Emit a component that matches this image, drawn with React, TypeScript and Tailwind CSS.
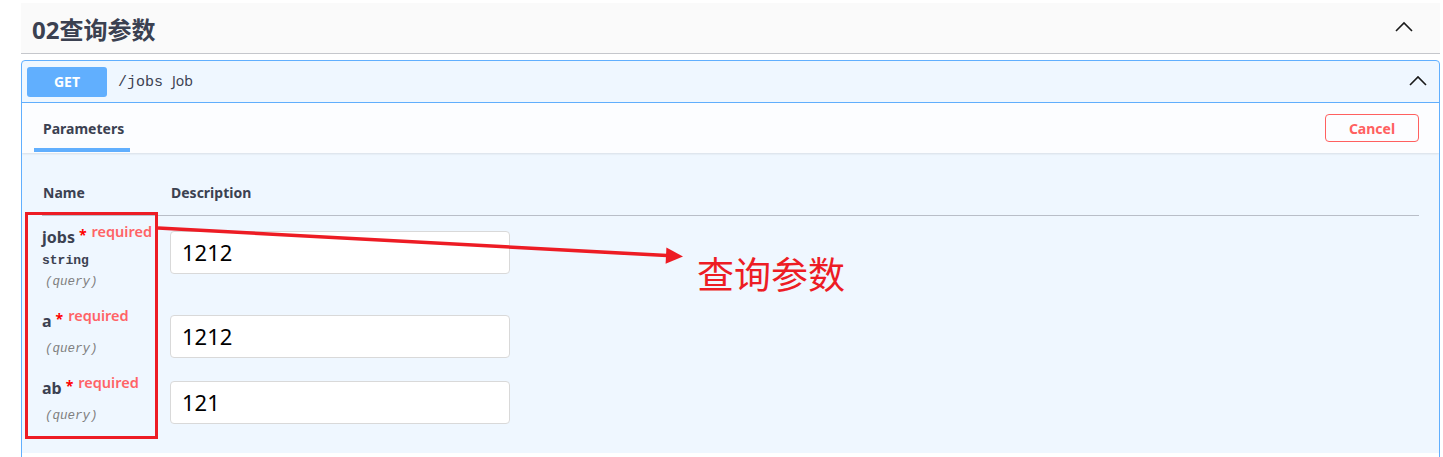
import React from "react";

const Chevron = ({ className }: { className?: string }) => (
  <svg className={className} width="18" height="11" viewBox="0 0 18 11" fill="none">
    <polyline points="1,10 9,2 17,10" stroke="#1a1a1a" strokeWidth="1.6" fill="none" />
  </svg>
);

const Req = () => (
  <>
    <span className="relative top-[-3px] ml-[4px] text-[14px] text-[#ff0000]">*</span>
    <span className="relative top-[-6px] ml-[5px] text-[14.5px] font-semibold text-[#ff6366]">required</span>
  </>
);

const Input = ({ value, mt }: { value: string; mt: string }) => (
  <div
    className={`w-[340px] h-[43px] ${mt} bg-white border border-[#d9d9d9] rounded-[4px] flex items-center pl-[11px] text-[22px] text-black`}
  >
    {value}
  </div>
);

export default function App() {
  return (
    <div
      className="relative w-[1443px] h-[457px] overflow-hidden bg-white"
      style={{ fontFamily: '"Noto Sans","Noto Sans CJK SC",sans-serif' }}
    >
      {/* Tag header */}
      <div className="ml-[21px] mr-[3px] pt-[3px]">
        <div className="h-[51px] bg-[#fafafa] border-b border-[#c5c7cc] flex items-center justify-between pl-[11px] pr-[27px]">
          <span className="text-[24px] font-bold text-[#3b4151] pt-[3px]">02查询参数</span>
          <Chevron className="mt-[-4px]" />
        </div>
      </div>

      {/* Opblock */}
      <div className="mt-[6px] ml-[21px] mr-[3px] border border-[#61affe] rounded-[4px] bg-[#eff7ff] overflow-hidden">
        {/* Summary */}
        <div className="h-[42px] border-b border-[#61affe] flex items-center pl-[5px] pr-[12px]">
          <div className="w-[80px] h-[30px] rounded-[3px] bg-[#61affe] flex items-center justify-center text-white text-[14px] font-bold">
            GET
          </div>
          <div className="ml-[11px] flex items-baseline pt-[2px]">
            <span
              className="text-[15px] text-[#3b4151]"
              style={{ fontFamily: '"Liberation Mono",monospace' }}
            >
              /jobs
            </span>
            <span className="ml-[9px] text-[14px] text-[#3b4151]">Job</span>
          </div>
          <div className="flex-1" />
          <Chevron className="mt-[-2px]" />
        </div>

        {/* Section header */}
        <div className="h-[50px] bg-white/80 shadow-[0_1px_2px_rgba(0,0,0,0.1)] flex items-center justify-between pr-[20px]">
          <div className="flex flex-col h-full ml-[12px]">
            <div className="flex-1 flex items-center pl-[9px] pr-[6px] pt-[5px] text-[14px] font-bold text-[#3b4151]">
              Parameters
            </div>
            <div className="h-[4px] bg-[#61affe] mb-[1px]" />
          </div>
          <div className="w-[94px] h-[28px] border border-[#ff6060] rounded-[4px] flex items-center justify-center text-[14px] font-bold text-[#ff6060]">
            Cancel
          </div>
        </div>

        {/* Table */}
        <div className="mx-[20px] pt-[29px]">
          <div className="flex h-[34px] border-b border-[#b9bec8] text-[14px] font-bold text-[#3b4151] leading-[22px]">
            <div className="w-[128px] pl-[1px]">Name</div>
            <div className="pl-[1px]">Description</div>
          </div>

          {/* Row 1 */}
          <div className="flex h-[84px]">
            <div className="w-[128px] pt-[9px]">
              <div className="h-[24px] leading-[24px] text-[16px] font-bold text-[#3b4151] whitespace-nowrap">
                jobs
                <Req />
              </div>
              <div
                className="mt-[4px] h-[16px] leading-[16px] text-[13px] font-semibold text-[#3b4151]"
                style={{ fontFamily: '"Liberation Mono",monospace' }}
              >
                string
              </div>
              <div
                className="mt-[5px] h-[16px] leading-[16px] pl-[3px] text-[12.5px] italic text-[#808080]"
                style={{ fontFamily: '"Liberation Mono",monospace' }}
              >
                (query)
              </div>
            </div>
            <Input value="1212" mt="mt-[15px]" />
          </div>

          {/* Row 2 */}
          <div className="flex h-[67px]">
            <div className="w-[128px] pt-[9px]">
              <div className="h-[24px] leading-[24px] text-[16px] font-bold text-[#3b4151] whitespace-nowrap">
                a
                <Req />
              </div>
              <div
                className="mt-[8px] h-[16px] leading-[16px] pl-[3px] text-[12.5px] italic text-[#808080]"
                style={{ fontFamily: '"Liberation Mono",monospace' }}
              >
                (query)
              </div>
            </div>
            <Input value="1212" mt="mt-[15px]" />
          </div>

          {/* Row 3 */}
          <div className="flex h-[86px]">
            <div className="w-[128px] pt-[9px]">
              <div className="h-[24px] leading-[24px] text-[16px] font-bold text-[#3b4151] whitespace-nowrap">
                ab
                <Req />
              </div>
              <div
                className="mt-[8px] h-[16px] leading-[16px] pl-[3px] text-[12.5px] italic text-[#808080]"
                style={{ fontFamily: '"Liberation Mono",monospace' }}
              >
                (query)
              </div>
            </div>
            <Input value="121" mt="mt-[14px]" />
          </div>
        </div>
        <div className="h-[20px] bg-white" />
      </div>

      {/* Annotation overlays */}
      <div className="absolute left-[25px] top-[212px] w-[133px] h-[227px] border-[3px] border-[#ed1c24]" />
      <svg className="absolute left-0 top-0 pointer-events-none" width="1443" height="457">
        <line x1="158" y1="228" x2="667" y2="255.6" stroke="#ed1c24" strokeWidth="3.5" />
        <polygon points="683,256.5 665.6,263.8 666.4,247.6" fill="#ed1c24" />
      </svg>
      <div
        className="absolute left-[697px] top-[255px] text-[37px] leading-none text-[#ed1c24]"
        style={{ fontFamily: '"Noto Sans CJK SC",sans-serif' }}
      >
        查询参数
      </div>
    </div>
  );
}
